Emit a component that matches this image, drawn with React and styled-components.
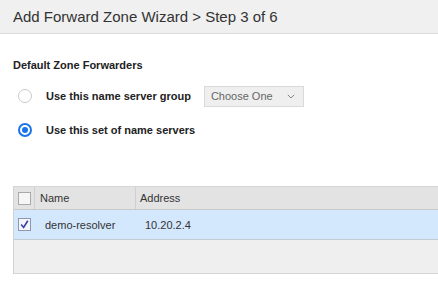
import React from "react";
import styled, { createGlobalStyle } from "styled-components";

const GlobalStyle = createGlobalStyle`
  html, body {
    margin: 0;
    padding: 0;
    background: #fff;
  }
  body {
    font-family: "Liberation Sans", Arial, sans-serif;
    color: #333;
    overflow: hidden;
  }
`;

const App = () => {
  return (
    <Page>
      <GlobalStyle />
      <Header>Add Forward Zone Wizard &gt; Step 3 of 6</Header>
      <Content>
        <SectionTitle>Default Zone Forwarders</SectionTitle>
        <Options>
          <OptionRow>
            <Radio />
            <OptionLabel>Use this name server group</OptionLabel>
            <Select>
              <span>Choose One</span>
              <svg width="8" height="5" viewBox="0 0 8 5">
                <path d="M0.8 0.8 L4 4 L7.2 0.8" fill="none" stroke="#888" strokeWidth="1" />
              </svg>
            </Select>
          </OptionRow>
          <OptionRow>
            <Radio checked />
            <OptionLabel>Use this set of name servers</OptionLabel>
          </OptionRow>
        </Options>
        <Table>
          <HeadRow>
            <CheckCell>
              <Checkbox />
            </CheckCell>
            <NameCell head>Name</NameCell>
            <AddressCell head>Address</AddressCell>
          </HeadRow>
          <DataRow>
            <CheckCell>
              <Checkbox checked>
                <svg width="9" height="9" viewBox="0 0 9 9">
                  <path d="M1.2 4.6 L3.6 7.4 L7.8 0.8" fill="none" stroke="#3a3fa8" strokeWidth="1.6" />
                </svg>
              </Checkbox>
            </CheckCell>
            <NameCell>demo-resolver</NameCell>
            <AddressCell>10.20.2.4</AddressCell>
          </DataRow>
          <EmptyArea />
        </Table>
      </Content>
    </Page>
  );
};

export default App;

const Page = styled.div`
  width: 438px;
  height: 290px;
`;

const Header = styled.div`
  height: 33px;
  line-height: 33px;
  padding-left: 13px;
  background: #f0f0f0;
  border-bottom: 1px solid #dcdcdc;
  font-size: 15px;
  color: #333;
`;

const Content = styled.div`
  padding-left: 13px;
`;

const SectionTitle = styled.div`
  margin-top: 24px;
  font-size: 11px;
  line-height: 14px;
  font-weight: bold;
  color: #222;
`;

const Options = styled.div`
  display: flex;
  flex-direction: column;
  gap: 12px;
  margin-top: 13px;
`;

const OptionRow = styled.div`
  display: flex;
  align-items: center;
  height: 22px;
`;

const Radio = styled.span`
  box-sizing: border-box;
  width: 14px;
  height: 14px;
  margin-left: 5px;
  border-radius: 50%;
  background: #fff;
  border: ${(p) => (p.checked ? "2px solid #1a73e8" : "1px solid #c9c9c9")};
  display: flex;
  align-items: center;
  justify-content: center;
  &::after {
    content: "";
    display: ${(p) => (p.checked ? "block" : "none")};
    width: 6px;
    height: 6px;
    border-radius: 50%;
    background: #1a73e8;
  }
`;

const OptionLabel = styled.span`
  margin-left: 14px;
  font-size: 11px;
  font-weight: bold;
  color: #222;
`;

const Select = styled.div`
  box-sizing: border-box;
  margin-left: 13px;
  width: 100px;
  height: 21px;
  padding: 0 8px 0 6px;
  display: flex;
  align-items: center;
  justify-content: space-between;
  background: #efefef;
  border: 1px solid #d9d9d9;
  font-size: 11px;
  color: #666;
`;

const Table = styled.div`
  margin-top: 45px;
  border-left: 1px solid #d2d2d2;
  font-size: 11px;
  color: #333;
`;

const HeadRow = styled.div`
  display: flex;
  height: 22px;
  background: #e3e3e3;
  border-top: 1px solid #d6d6d6;
  border-bottom: 1px solid #c9c9c9;
`;

const DataRow = styled.div`
  display: flex;
  height: 29px;
  background: #d3e7fd;
  border-bottom: 1px solid #c4ccd6;
`;

const CheckCell = styled.div`
  width: 20px;
  display: flex;
  align-items: center;
  justify-content: center;
`;

const NameCell = styled.div`
  box-sizing: border-box;
  width: 101px;
  display: flex;
  align-items: center;
  padding-left: ${(p) => (p.head ? "5px" : "10px")};
  border-left: ${(p) => (p.head ? "1px solid #cfcfcf" : "none")};
  margin-left: ${(p) => (p.head ? "0" : "1px")};
`;

const AddressCell = styled(NameCell)`
  flex: 1;
  width: auto;
  padding-left: ${(p) => (p.head ? "4px" : "8px")};
`;

const Checkbox = styled.span`
  box-sizing: border-box;
  width: 13px;
  height: 13px;
  background: ${(p) => (p.checked ? "#f4f6fb" : "#f6f6f6")};
  border: 1px solid ${(p) => (p.checked ? "#8e97b0" : "#a9a9a9")};
  display: flex;
  align-items: center;
  justify-content: center;
`;

const EmptyArea = styled.div`
  height: 33px;
  background: #efefef;
  border-bottom: 1px solid #d4d4d4;
`;
